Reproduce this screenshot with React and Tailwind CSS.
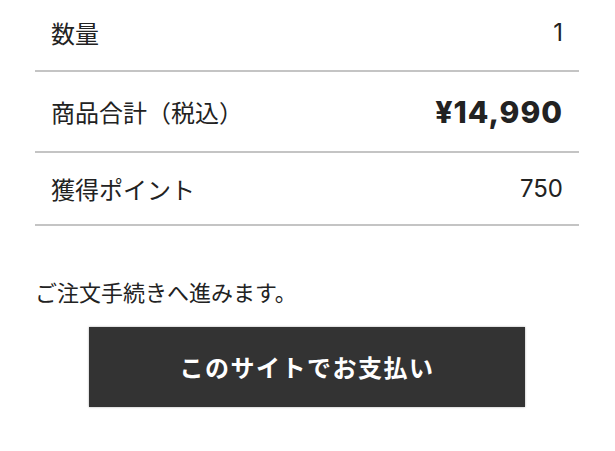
export default function App() {
  const jp = { fontFamily: '"Noto Sans CJK JP", "Noto Sans", sans-serif' };
  const num = { fontFamily: 'Inter, "Noto Sans", sans-serif' };
  return (
    <div className="w-[615px] h-[451px] bg-white overflow-hidden text-[#222]" style={jp}>
      <div className="ml-[35px] w-[544px]">
        <div className="flex items-center justify-between h-[72px] pb-[5px] px-[16px] border-b-2 border-[#c4c4c4]">
          <span className="text-[24px] leading-[36px]">数量</span>
          <span className="text-[24px] leading-[36px]" style={num}>1</span>
        </div>
        <div className="flex items-center justify-between h-[81px] px-[16px] border-b-2 border-[#c4c4c4]">
          <span className="text-[24px] leading-[36px]">商品合計（税込）</span>
          <span className="text-[30px] leading-[40px] font-extrabold tracking-[1px]" style={num}>¥14,990</span>
        </div>
        <div className="flex items-center justify-between h-[73px] px-[16px] border-b-2 border-[#c4c4c4]">
          <span className="text-[24px] leading-[36px]">獲得ポイント</span>
          <span className="text-[24px] leading-[36px]" style={num}>750</span>
        </div>
        <p className="mt-[50px] text-[22px] leading-[30px]">ご注文手続きへ進みます。</p>
        <div className="mt-[21px] flex justify-center">
          <button className="w-[436px] h-[80px] bg-[#333333] text-white text-[24px] font-bold tracking-[1.5px] shadow-[0_0_2px_rgba(0,0,0,0.35)] flex items-center justify-center">
            このサイトでお支払い
          </button>
        </div>
      </div>
    </div>
  );
}
